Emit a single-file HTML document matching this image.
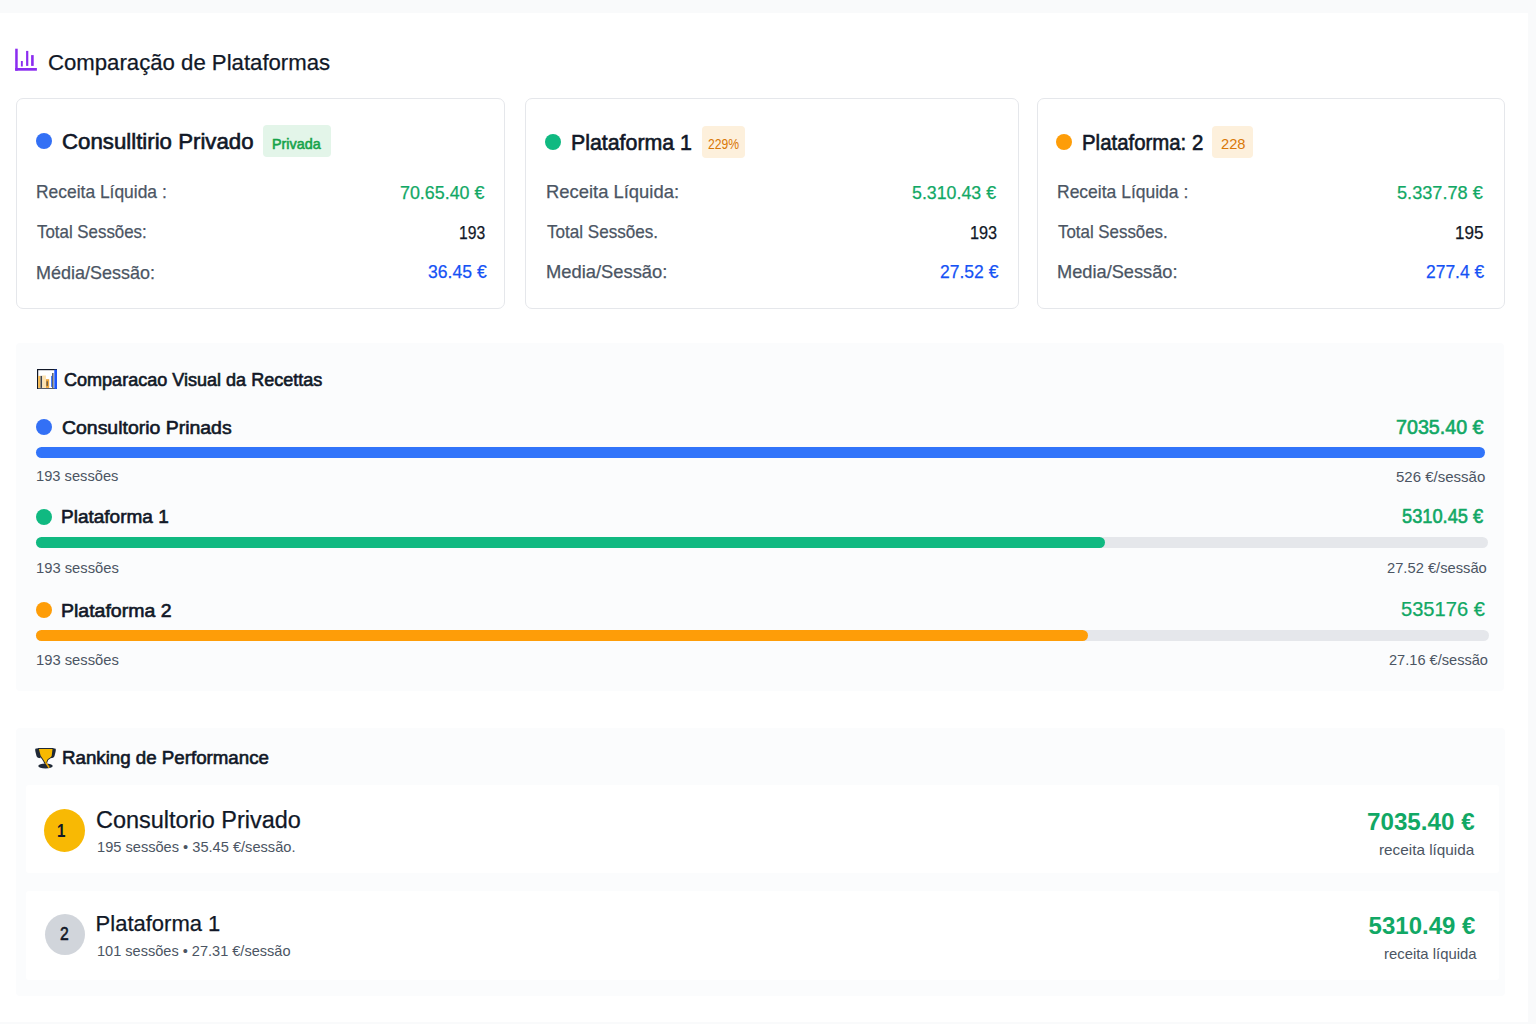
<!DOCTYPE html>
<html><head><meta charset="utf-8">
<style>
html,body{margin:0;padding:0;}
body{width:1536px;height:1024px;position:relative;overflow:hidden;background:#f9fafb;font-family:"Liberation Sans",sans-serif;color:#111827;}
.main{position:absolute;left:0;top:13px;width:1528px;height:1009px;background:#ffffff;}
.a{position:absolute;}
.t{position:absolute;white-space:nowrap;line-height:1;transform-origin:0 0;}
.card{position:absolute;background:#fff;border:1px solid #e5e7eb;border-radius:7px;box-sizing:border-box;}
.dot{position:absolute;width:16px;height:16px;border-radius:50%;}
.badge{position:absolute;border-radius:4px;}
.panel{position:absolute;background:#fbfcfd;border-radius:4px;}
.bar{position:absolute;height:11px;border-radius:6px;}
.row{position:absolute;background:#fff;border-radius:3px;}
</style></head><body>
<div class="main"></div>

<svg class="a" style="left:15px;top:48px" width="23" height="23" viewBox="0 0 23 23">
  <rect x="0.2" y="0.7" width="2.5" height="22" fill="#8b2cf0"/>
  <rect x="0.2" y="20" width="21.7" height="2.7" fill="#8b2cf0"/>
  <rect x="5.9" y="13" width="1.9" height="5.5" fill="#8b2cf0"/>
  <rect x="11.1" y="2.9" width="2.2" height="15" fill="#8b2cf0"/>
  <rect x="16.1" y="7.1" width="2.6" height="10.8" fill="#8b2cf0"/>
</svg>

<div class="card" style="left:16px;top:98px;width:489px;height:211px;"></div>
<div class="card" style="left:525px;top:98px;width:494px;height:211px;"></div>
<div class="card" style="left:1037px;top:98px;width:468px;height:211px;"></div>

<div class="dot" style="left:36px;top:133px;background:#3370f5;"></div>
<div class="badge" style="left:263px;top:125px;width:68px;height:32px;background:#e3f5e9;"></div>
<div class="dot" style="left:545px;top:134px;background:#10b981;"></div>
<div class="badge" style="left:702px;top:126px;width:43px;height:32px;background:#fdf0dc;"></div>
<div class="dot" style="left:1056px;top:134px;background:#fe9d08;"></div>
<div class="badge" style="left:1212px;top:126px;width:41px;height:32px;background:#fdf0dc;"></div>

<div class="panel" style="left:16px;top:343px;width:1488px;height:348px;"></div>
<svg class="a" style="left:36.5px;top:368.8px" width="20.5" height="20.5" viewBox="0 0 20.5 20.5">
  <rect x="0.6" y="0.6" width="19.3" height="19.3" fill="#fff" stroke="#111827" stroke-width="1.2"/>
  <rect x="1.2" y="6.9" width="2.3" height="12" fill="#f7b84a"/>
  <rect x="3.5" y="6.9" width="1.7" height="12" fill="#3b4350"/>
  <rect x="5.3" y="6.5" width="3.7" height="12.4" fill="#fde2b0"/>
  <rect x="9" y="10.2" width="3.2" height="8.7" fill="#eba43a"/>
  <rect x="9.6" y="12.3" width="1.1" height="4.6" fill="#3b4350"/>
  <rect x="14.2" y="6.9" width="1" height="11" fill="#1d5cf5"/>
  <rect x="15.2" y="4" width="1.3" height="15" fill="#3b4350"/>
  <rect x="17.3" y="0.6" width="2.6" height="19.3" fill="#1a56ff"/>
</svg>
<div class="dot" style="left:36px;top:419px;background:#3370f5;"></div>
<div class="bar" style="left:36px;top:447px;width:1449px;background:#3174fa;"></div>
<div class="dot" style="left:36px;top:509px;background:#10b981;"></div>
<div class="bar" style="left:36px;top:537px;width:1452px;background:#e5e7eb;"></div>
<div class="bar" style="left:36px;top:537px;width:1069px;background:#10b981;"></div>
<div class="dot" style="left:36px;top:602px;background:#fe9d08;"></div>
<div class="bar" style="left:36px;top:630px;width:1453px;background:#e5e7eb;"></div>
<div class="bar" style="left:36px;top:630px;width:1052px;background:#fe9d08;"></div>

<div class="panel" style="left:16px;top:728px;width:1489px;height:268px;"></div>
<svg class="a" style="left:35px;top:747px" width="21" height="22" viewBox="0 0 21 22">
  <path d="M1 1.5 C0 1.5 0 3 0.5 5 L1.5 9 C2 10.5 3.5 11.2 5.5 11.2 L5.5 1.5 Z" fill="#1f2937"/>
  <path d="M20 1.5 C21 1.5 21 3 20.5 5 L19.5 9 C19 10.5 17.5 11.2 15.5 11.2 L15.5 1.5 Z" fill="#1f2937"/>
  <path d="M2.6 1 H18.6 L17.6 9.6 C16.6 11 14.6 12 13.2 13 L11.8 16.8 H9.4 C8 13.2 6 11 4.4 9 Z" fill="#1f2937"/>
  <path d="M3.9 2 H17.5 L16.7 9 C15.9 10.3 14.1 11.3 12.6 12.3 L11.1 15.8 H10.1 C8.9 13 7.1 10.8 5.6 8.6 Z" fill="#f7b900"/>
  <ellipse cx="10.5" cy="19" rx="7.2" ry="2.4" fill="#1f2937"/>
  <path d="M10.8 15.6 L14.2 20.8" stroke="#f0a800" stroke-width="1.6"/>
</svg>
<div class="row" style="left:26px;top:785px;width:1473px;height:88px;"></div>
<div class="a" style="left:44px;top:809px;width:41px;height:43px;border-radius:50%;background:#f8b904;"></div>
<div class="row" style="left:26px;top:891px;width:1473px;height:89px;"></div>
<div class="a" style="left:45px;top:914px;width:40px;height:41px;border-radius:50%;background:#d1d5db;"></div>

<div class="t" style="left:47.69px;top:51.70px;font-size:22px;-webkit-text-stroke:0.25px currentColor;color:#111827;transform:scaleX(1.0075);">Comparação de Plataformas</div>
<div class="t" style="left:61.67px;top:132.20px;font-size:21.5px;-webkit-text-stroke:0.6px currentColor;color:#111827;transform:scaleX(1.0342);">Consulltirio Privado</div>
<div class="t" style="left:272.34px;top:135.80px;font-size:15px;-webkit-text-stroke:0.6px currentColor;color:#16a34a;transform:scaleX(0.9560);">Privada</div>
<div class="t" style="left:36.06px;top:183.10px;font-size:18.5px;-webkit-text-stroke:0.25px currentColor;color:#4b5563;transform:scaleX(0.9416);">Receita Líquida :</div>
<div class="t" style="left:37.00px;top:222.90px;font-size:18.5px;-webkit-text-stroke:0.25px currentColor;color:#4b5563;transform:scaleX(0.9118);">Total Sessões:</div>
<div class="t" style="left:36.03px;top:263.50px;font-size:18.5px;-webkit-text-stroke:0.25px currentColor;color:#4b5563;transform:scaleX(0.9717);">Média/Sessão:</div>
<div class="t" style="left:400.03px;top:183.70px;font-size:18.5px;-webkit-text-stroke:0.25px currentColor;color:#11a865;transform:scaleX(0.9655);">70.65.40 €</div>
<div class="t" style="left:458.85px;top:223.60px;font-size:18.5px;-webkit-text-stroke:0.25px currentColor;color:#111827;transform:scaleX(0.8483);">193</div>
<div class="t" style="left:428.05px;top:262.90px;font-size:18.5px;-webkit-text-stroke:0.25px currentColor;color:#1552f5;transform:scaleX(0.9508);">36.45 €</div>
<div class="t" style="left:571.01px;top:133.00px;font-size:21.5px;-webkit-text-stroke:0.6px currentColor;color:#111827;transform:scaleX(0.9917);">Plataforma 1</div>
<div class="t" style="left:707.96px;top:136.50px;font-size:14.5px;color:#d97706;transform:scaleX(0.8389);">229%</div>
<div class="t" style="left:545.71px;top:183.40px;font-size:18.5px;-webkit-text-stroke:0.25px currentColor;color:#4b5563;transform:scaleX(0.9947);">Receita Líquida:</div>
<div class="t" style="left:546.70px;top:222.90px;font-size:18.5px;-webkit-text-stroke:0.25px currentColor;color:#4b5563;transform:scaleX(0.9235);">Total Sessões.</div>
<div class="t" style="left:545.71px;top:263.20px;font-size:18.5px;-webkit-text-stroke:0.25px currentColor;color:#4b5563;transform:scaleX(0.9917);">Media/Sessão:</div>
<div class="t" style="left:912.34px;top:183.60px;font-size:18.5px;-webkit-text-stroke:0.25px currentColor;color:#11a865;transform:scaleX(0.9609);">5.310.43 €</div>
<div class="t" style="left:969.92px;top:223.90px;font-size:18.5px;-webkit-text-stroke:0.25px currentColor;color:#111827;transform:scaleX(0.8793);">193</div>
<div class="t" style="left:940.25px;top:263.20px;font-size:18.5px;-webkit-text-stroke:0.25px currentColor;color:#1552f5;transform:scaleX(0.9475);">27.52 €</div>
<div class="t" style="left:1081.55px;top:133.00px;font-size:21.5px;-webkit-text-stroke:0.6px currentColor;color:#111827;transform:scaleX(0.9484);">Plataforma: 2</div>
<div class="t" style="left:1220.99px;top:136.50px;font-size:14.5px;color:#d97706;transform:scaleX(1.0130);">228</div>
<div class="t" style="left:1056.55px;top:183.40px;font-size:18.5px;-webkit-text-stroke:0.25px currentColor;color:#4b5563;transform:scaleX(0.9453);">Receita Líquida :</div>
<div class="t" style="left:1057.50px;top:222.90px;font-size:18.5px;-webkit-text-stroke:0.25px currentColor;color:#4b5563;transform:scaleX(0.9118);">Total Sessões.</div>
<div class="t" style="left:1056.52px;top:262.60px;font-size:18.5px;-webkit-text-stroke:0.25px currentColor;color:#4b5563;transform:scaleX(0.9850);">Media/Sessão:</div>
<div class="t" style="left:1396.72px;top:183.90px;font-size:18.5px;-webkit-text-stroke:0.25px currentColor;color:#11a865;transform:scaleX(0.9816);">5.337.78 €</div>
<div class="t" style="left:1455.38px;top:224.30px;font-size:18.5px;-webkit-text-stroke:0.25px currentColor;color:#111827;transform:scaleX(0.9207);">195</div>
<div class="t" style="left:1425.76px;top:263.20px;font-size:18.5px;-webkit-text-stroke:0.25px currentColor;color:#1552f5;transform:scaleX(0.9426);">277.4 €</div>
<div class="t" style="left:63.90px;top:371.80px;font-size:17.5px;-webkit-text-stroke:0.6px currentColor;color:#111827;transform:scaleX(1.0307);">Comparacao Visual da Recettas</div>
<div class="t" style="left:61.65px;top:418.70px;font-size:18.5px;-webkit-text-stroke:0.6px currentColor;color:#111827;transform:scaleX(1.0506);">Consultorio Prinads</div>
<div class="t" style="left:1395.99px;top:418.00px;font-size:19.5px;-webkit-text-stroke:0.6px currentColor;color:#11a865;transform:scaleX(1.0093);">7035.40 €</div>
<div class="t" style="left:36.02px;top:468.00px;font-size:15px;color:#4b5563;transform:scaleX(0.9783);">193 sessões</div>
<div class="t" style="left:1396.00px;top:468.50px;font-size:15px;color:#4b5563;">526 €/sessão</div>
<div class="t" style="left:61.47px;top:508.40px;font-size:18.5px;-webkit-text-stroke:0.6px currentColor;color:#111827;transform:scaleX(1.0272);">Plataforma 1</div>
<div class="t" style="left:1402.36px;top:507.40px;font-size:19.5px;-webkit-text-stroke:0.6px currentColor;color:#11a865;transform:scaleX(0.9360);">5310.45 €</div>
<div class="t" style="left:36.02px;top:559.70px;font-size:15px;color:#4b5563;transform:scaleX(0.9831);">193 sessões</div>
<div class="t" style="left:1386.72px;top:559.50px;font-size:15px;color:#4b5563;transform:scaleX(0.9810);">27.52 €/sessão</div>
<div class="t" style="left:61.45px;top:602.00px;font-size:18.5px;-webkit-text-stroke:0.6px currentColor;color:#111827;transform:scaleX(1.0534);">Plataforma 2</div>
<div class="t" style="left:1401.47px;top:600.00px;font-size:19.5px;-webkit-text-stroke:0.25px currentColor;color:#11a865;transform:scaleX(1.0312);">535176 €</div>
<div class="t" style="left:36.02px;top:651.90px;font-size:15px;color:#4b5563;transform:scaleX(0.9831);">193 sessões</div>
<div class="t" style="left:1389.03px;top:651.70px;font-size:15px;color:#4b5563;transform:scaleX(0.9725);">27.16 €/sessão</div>
<div class="t" style="left:62.43px;top:749.75px;font-size:17.5px;-webkit-text-stroke:0.6px currentColor;color:#111827;transform:scaleX(1.0690);">Ranking de Performance</div>
<div class="t" style="left:56.70px;top:820.60px;font-size:19px;font-weight:700;color:#111827;transform:scaleX(0.8000);">1</div>
<div class="t" style="left:95.88px;top:808.70px;font-size:23px;-webkit-text-stroke:0.25px currentColor;color:#111827;transform:scaleX(1.0206);">Consultorio Privado</div>
<div class="t" style="left:97.03px;top:838.70px;font-size:15px;color:#4b5563;transform:scaleX(0.9743);">195 sessões • 35.45 €/sessão.</div>
<div class="t" style="left:1367.29px;top:809.50px;font-size:24px;font-weight:700;color:#11a865;transform:scaleX(1.0076);">7035.40 €</div>
<div class="t" style="left:1378.88px;top:841.75px;font-size:15px;color:#4b5563;transform:scaleX(1.0204);">receita líquida</div>
<div class="t" style="left:60.20px;top:925.30px;font-size:18.5px;-webkit-text-stroke:0.6px currentColor;color:#111827;transform:scaleX(0.8500);">2</div>
<div class="t" style="left:95.60px;top:913.20px;font-size:22px;-webkit-text-stroke:0.25px currentColor;color:#111827;">Plataforma 1</div>
<div class="t" style="left:97.03px;top:943.40px;font-size:15px;color:#4b5563;transform:scaleX(0.9697);">101 sessões • 27.31 €/sessão</div>
<div class="t" style="left:1368.60px;top:913.60px;font-size:24px;font-weight:700;color:#11a865;">5310.49 €</div>
<div class="t" style="left:1384.21px;top:946.30px;font-size:15px;color:#4b5563;transform:scaleX(0.9914);">receita líquida</div>
</body></html>
